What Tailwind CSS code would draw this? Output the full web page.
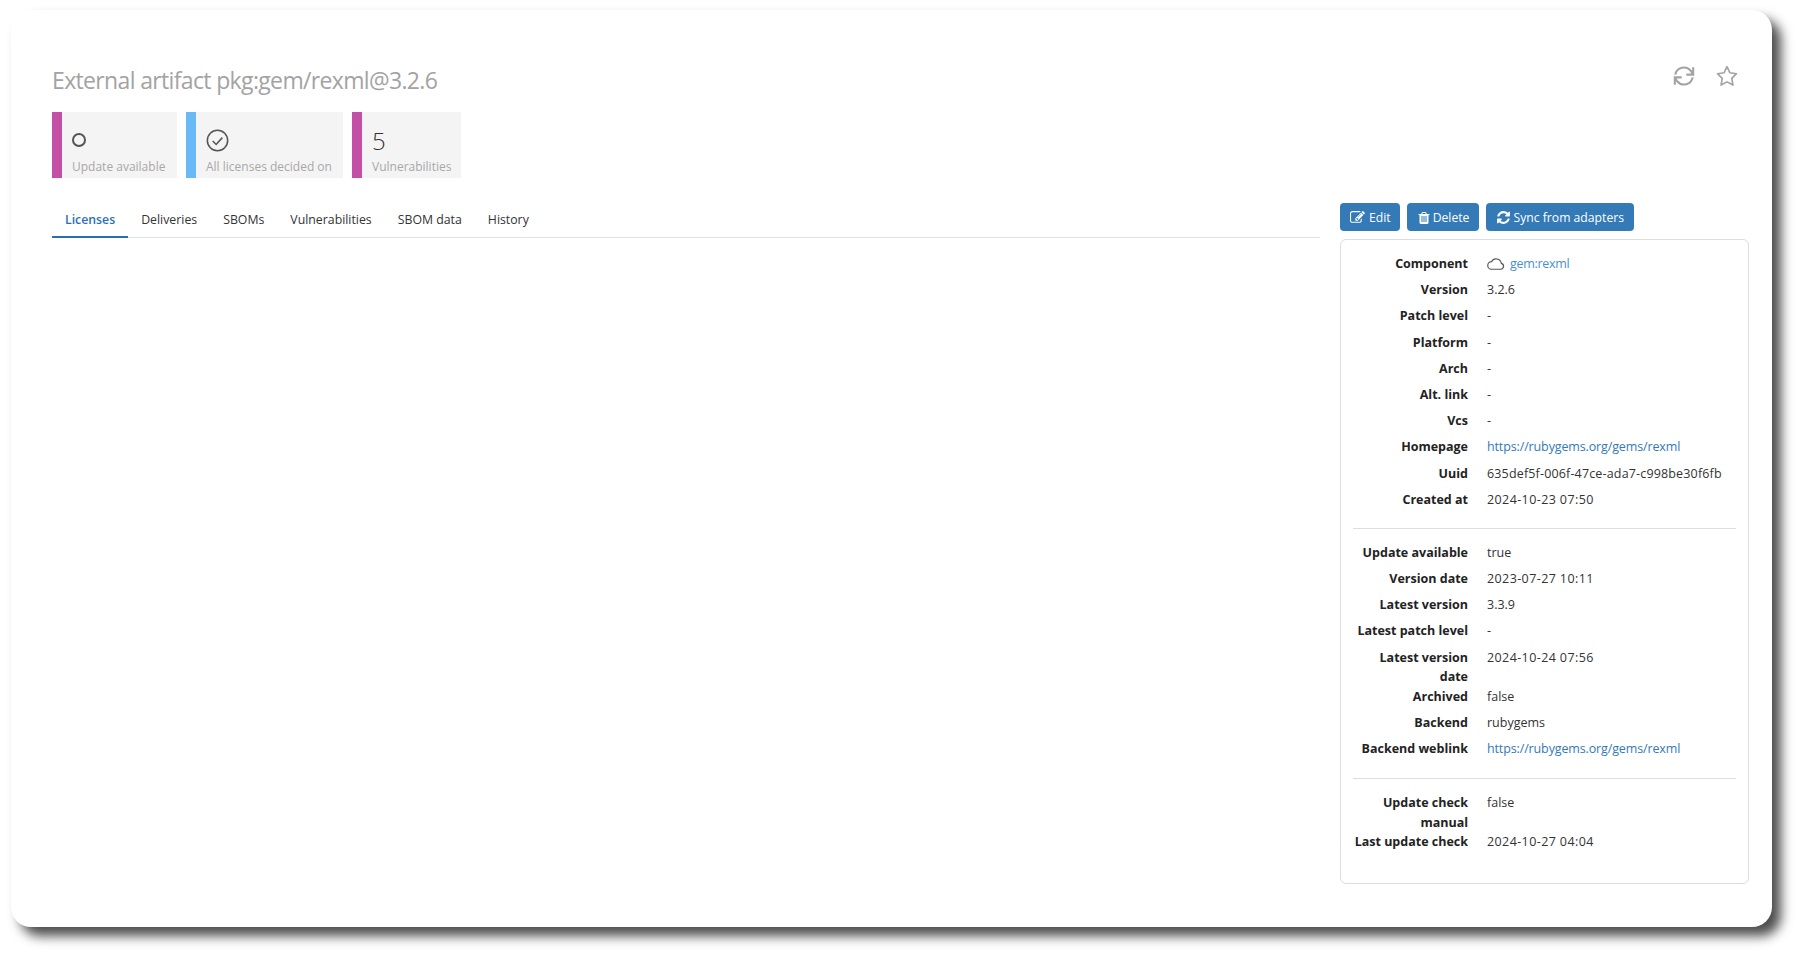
<!DOCTYPE html>
<html lang="en">
<head>
  <meta charset="UTF-8">
  <title>External artifact pkg:gem/rexml@3.2.6</title>
  <script src="https://cdn.jsdelivr.net/npm/@tailwindcss/browser@4"></script>
</head>
<body class="bg-white font-['Open_Sans',sans-serif] text-[#333] text-[12.5px] leading-[19.5px] overflow-hidden">
  <div class="w-[1800px] h-[955px] pt-[10px] pl-[11px]">
    <div class="w-[1761px] h-[917px] bg-white rounded-[20px] shadow-[9px_9px_12px_rgba(0,0,0,0.7)] pt-[51px] pl-[41px] pr-[22px] relative">
      <div class="flex justify-between items-start">
        <h1 class="text-[23px] leading-[38px] tracking-[-0.65px] text-[#a3a3a3]">External artifact pkg:gem/rexml@3.2.6</h1>
        <div class="flex items-center gap-[21px] pr-[12px] pt-[4px] text-[#a3a3a3]">
          <svg class="w-[22px] h-[22px]" viewBox="0 0 24 24" fill="none" stroke="currentColor" stroke-width="2.3"><path d="M2.5 10.5A9.6 9.6 0 0 1 19.5 6.5L21.5 9.5"/><path d="M22 2.5V10.5H14.5"/><path d="M21.5 13.5A9.6 9.6 0 0 1 4.5 17.5L2.5 14.5"/><path d="M2 21.5V13.5H9.5"/></svg>
          <svg class="w-[22px] h-[22px]" viewBox="0 0 24 24" fill="none" stroke="currentColor" stroke-width="1.8" stroke-linejoin="round"><path d="M12 1.8l3.2 6.7 7.2 1-5.2 5.1 1.3 7.3-6.5-3.5-6.5 3.5 1.3-7.3-5.2-5.1 7.2-1z"/></svg>
        </div>
      </div>

      <div class="flex gap-[9px] mt-[13px] text-[12px]">
        <div class="flex h-[66px] w-[125px] bg-[#f4f4f4]">
          <div class="w-[10px] bg-[#c44fa6]"></div>
          <div class="pl-[10px] pt-[14px]">
            <div class="h-[28px] flex items-center"><span class="block w-[14px] h-[14px] rounded-full border-2 border-[#555]"></span></div>
            <div class="text-[#a8a8a8] mt-[3px]">Update available</div>
          </div>
        </div>
        <div class="flex h-[66px] w-[157px] bg-[#f4f4f4]">
          <div class="w-[10px] bg-[#68b9f5]"></div>
          <div class="pl-[10px] pt-[14px]">
            <div class="h-[28px] flex items-center">
              <svg class="w-[23px] h-[23px]" viewBox="0 0 24 24" fill="none" stroke="#555" stroke-width="1.6"><circle cx="12" cy="12" r="10.6"/><path d="M7 12.5l3.6 3.6L17 9"/></svg>
            </div>
            <div class="text-[#a8a8a8] mt-[3px]">All licenses decided on</div>
          </div>
        </div>
        <div class="flex h-[66px] w-[109px] bg-[#f4f4f4]">
          <div class="w-[10px] bg-[#c44fa6]"></div>
          <div class="pl-[10px] pt-[15px]">
            <div class="h-[28px] flex items-center text-[24px] font-light text-[#333]">5</div>
            <div class="text-[#a8a8a8] mt-[2px]">Vulnerabilities</div>
          </div>
        </div>
      </div>

      <div class="flex gap-[20px] mt-[25px]">
        <div class="w-[1268px] text-[12.3px]">
          <div class="flex border-b border-[#dfe3e8] h-[35px]">
            <a class="px-[13px] h-[35px] leading-[34px] font-semibold text-[#2a6fb5] border-b-2 border-[#2a6fb5]">Licenses</a>
            <a class="px-[13px] leading-[34px]">Deliveries</a>
            <a class="px-[13px] leading-[34px]">SBOMs</a>
            <a class="px-[13px] leading-[34px]">Vulnerabilities</a>
            <a class="px-[13px] leading-[34px]">SBOM data</a>
            <a class="px-[13px] leading-[34px]">History</a>
          </div>
        </div>
        <div class="w-[409px]">
          <div class="flex gap-[7px] h-[28px] text-[12.2px]">
            <button class="flex items-center gap-[4px] pl-[10px] pr-[9px] pt-[1px] bg-[#337ab7] text-white rounded-[4px]">
              <svg class="w-[15px] h-[15px]" viewBox="0 0 1792 1792" fill="currentColor"><path d="M888 1184l116-116-152-152-116 116v56h96v96h56zm440-720q-16-16-33 1l-350 350q-17 17-1 33t33-1l350-350q17-17 1-33zm80 594v190q0 119-84.5 203.5t-203.5 84.5h-832q-119 0-203.5-84.5t-84.5-203.5v-832q0-119 84.5-203.5t203.5-84.5h832q63 0 117 25 15 7 18 23 3 17-9 29l-49 49q-14 14-32 8-23-6-45-6h-832q-66 0-113 47t-47 113v832q0 66 47 113t113 47h832q66 0 113-47t47-113v-126q0-13 9-22l64-64q15-15 35-7t20 29zm-96-738l288 288-672 672h-288v-288zm444 132l-92 92-288-288 92-92q28-28 68-28t68 28l152 152q28 28 28 68t-28 68z"/></svg>Edit
            </button>
            <button class="flex items-center gap-[2px] px-[10px] pt-[1px] bg-[#337ab7] text-white rounded-[4px]">
              <svg class="w-[14px] h-[14px]" viewBox="0 0 1792 1792" fill="currentColor"><path d="M704 1376v-704q0-14-9-23t-23-9h-64q-14 0-23 9t-9 23v704q0 14 9 23t23 9h64q14 0 23-9t9-23zm256 0v-704q0-14-9-23t-23-9h-64q-14 0-23 9t-9 23v704q0 14 9 23t23 9h64q14 0 23-9t9-23zm256 0v-704q0-14-9-23t-23-9h-64q-14 0-23 9t-9 23v704q0 14 9 23t23 9h64q14 0 23-9t9-23zm-544-992h448l-48-117q-7-9-17-11h-317q-10 2-17 11zm928 32v64q0 14-9 23t-23 9h-96v948q0 83-47 143.5t-113 60.5h-832q-66 0-113-58.5t-47-141.5v-952h-96q-14 0-23-9t-9-23v-64q0-14 9-23t23-9h309l70-167q15-37 54-63t79-26h320q40 0 79 26t54 63l70 167h309q14 0 23 9t9 23z"/></svg>Delete
            </button>
            <button class="flex items-center gap-[2px] px-[10px] pt-[1px] bg-[#337ab7] text-white rounded-[4px]">
              <svg class="w-[15px] h-[15px]" viewBox="0 0 1792 1792" fill="currentColor"><path d="M1639 1056q0 5-1 7-64 268-268 434.5t-478 166.5q-146 0-282.5-55t-243.5-157l-129 129q-19 19-45 19t-45-19-19-45v-448q0-26 19-45t45-19h448q26 0 45 19t19 45-19 45l-137 137q71 66 161 102t187 36q134 0 250-65t186-179q11-17 53-117 8-23 30-23h192q13 0 22.5 9.5t9.5 22.5zm25-800v448q0 26-19 45t-45 19h-448q-26 0-45-19t-19-45 19-45l138-138q-148-137-349-137-134 0-250 65t-186 179q-11 17-53 117-8 23-30 23h-199q-13 0-22.5-9.5t-9.5-22.5v-7q65-268 270-434.5t480-166.5q146 0 284 55.5t245 156.5l130-129q19-19 45-19t45 19 19 45z"/></svg>Sync from adapters
            </button>
          </div>
          <div class="mt-[8px] h-[645px] border border-[#ddd] rounded-[6px] pt-[14px] px-[12px]">
            <dl class="grid grid-cols-[115px_1fr] gap-x-[19px] auto-rows-[minmax(26.2px,auto)]">
              <dt class="font-bold text-right text-[#222]">Component</dt>
              <dd class="flex items-start gap-[5px]"><svg class="w-[18px] h-[19.5px]" viewBox="0 0 18 14" fill="none" stroke="#555" stroke-width="1.2"><path d="M4.5 12.5h9.2a3 3 0 0 0 .6-5.9A5.2 5.2 0 0 0 4.6 4.9a3.8 3.8 0 0 0-.1 7.6z"/></svg><a class="text-[#4a8fd3] tracking-[-0.3px]">gem:rexml</a></dd>
              <dt class="font-bold text-right text-[#222]">Version</dt><dd>3.2.6</dd>
              <dt class="font-bold text-right text-[#222]">Patch level</dt><dd>-</dd>
              <dt class="font-bold text-right text-[#222]">Platform</dt><dd>-</dd>
              <dt class="font-bold text-right text-[#222]">Arch</dt><dd>-</dd>
              <dt class="font-bold text-right text-[#222]">Alt. link</dt><dd>-</dd>
              <dt class="font-bold text-right text-[#222]">Vcs</dt><dd>-</dd>
              <dt class="font-bold text-right text-[#222]">Homepage</dt><dd><a class="text-[#337ab7] tracking-[-0.13px]">https://rubygems.org/gems/rexml</a></dd>
              <dt class="font-bold text-right text-[#222]">Uuid</dt><dd class="tracking-[0.16px]">635def5f-006f-47ce-ada7-c998be30f6fb</dd>
              <dt class="font-bold text-right text-[#222]">Created at</dt><dd class="tracking-[0.4px]">2024-10-23 07:50</dd>
            </dl>
            <hr class="border-[#ddd] mt-[12px] mb-[14px]">
            <dl class="grid grid-cols-[115px_1fr] gap-x-[19px] auto-rows-[minmax(26.2px,auto)]">
              <dt class="font-bold text-right text-[#222]">Update available</dt><dd>true</dd>
              <dt class="font-bold text-right text-[#222]">Version date</dt><dd class="tracking-[0.4px]">2023-07-27 10:11</dd>
              <dt class="font-bold text-right text-[#222]">Latest version</dt><dd>3.3.9</dd>
              <dt class="font-bold text-right text-[#222]">Latest patch level</dt><dd>-</dd>
              <dt class="font-bold text-right text-[#222]">Latest version date</dt><dd class="tracking-[0.4px]">2024-10-24 07:56</dd>
              <dt class="font-bold text-right text-[#222]">Archived</dt><dd>false</dd>
              <dt class="font-bold text-right text-[#222]">Backend</dt><dd>rubygems</dd>
              <dt class="font-bold text-right text-[#222]">Backend weblink</dt><dd><a class="text-[#337ab7] tracking-[-0.13px]">https://rubygems.org/gems/rexml</a></dd>
            </dl>
            <hr class="border-[#ddd] mt-[13px] mb-[14px]">
            <dl class="grid grid-cols-[115px_1fr] gap-x-[19px] auto-rows-[minmax(26.2px,auto)]">
              <dt class="font-bold text-right text-[#222]">Update check manual</dt><dd>false</dd>
              <dt class="font-bold text-right text-[#222]">Last update check</dt><dd class="tracking-[0.4px]">2024-10-27 04:04</dd>
            </dl>
          </div>
        </div>
      </div>
    </div>
  </div>
</body>
</html>
